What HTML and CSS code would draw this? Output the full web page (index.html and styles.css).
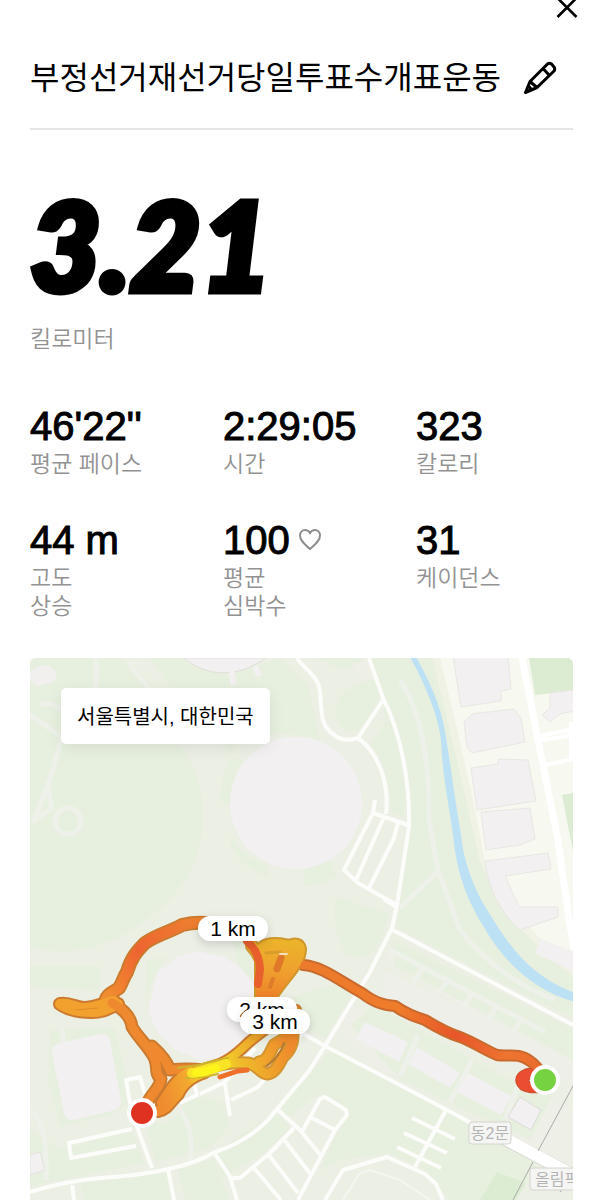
FILE: index.html
```html
<!DOCTYPE html>
<html lang="ko">
<head>
  <meta charset="UTF-8">
  <meta name="viewport" content="width=device-width, initial-scale=1.0">
  <title>부정선거재선거당일투표수개표운동</title>
  <link rel="stylesheet" href="styles.css">
</head>

<body>

  <div class="top-bar">
    <button class="icon-button" aria-label="닫기">
      <svg width="24" height="20" viewBox="0 0 24 20"><path d="M2.500 -2L21.500 17M21.500 -2L2.500 17" fill="none" stroke="#000" stroke-width="2.600"/></svg>
    </button>
  </div>

  <main class="activity">
    <header class="title-row">
      <h1>부정선거재선거당일투표수개표운동</h1>
      <button class="icon-button" aria-label="이름 수정">
        <svg width="34" height="34" viewBox="0 0 34 34" fill="none" stroke="#000" stroke-width="3" stroke-linejoin="round">
          <path d="M2.500 31.500L7 20.500L24.500 3Q26.500 1.500 28.500 3L31 6Q32.500 8 31 10L14 26.500Z"/>
          <path d="M20 7.500L26.500 14.500M7 20.500L14 26.500M5.500 25L9 29"/>
        </svg>
      </button>
    </header>

    <section class="distance">
      <p class="distance-value">3.21</p>
      <p class="label">킬로미터</p>
    </section>

    <section class="stats">
      <div>
        <p class="value">46'22''</p>
        <p class="label">평균 페이스</p>
      </div>
      <div>
        <p class="value">2:29:05</p>
        <p class="label">시간</p>
      </div>
      <div>
        <p class="value">323</p>
        <p class="label">칼로리</p>
      </div>
      <div>
        <p class="value">44 m</p>
        <p class="label">고도<br>상승</p>
      </div>
      <div>
        <p class="value">100
          <svg class="heart" width="24" height="24" viewBox="0 0 24 24"><path d="M12 21C7 16.500 2 13 2 7.500C2 4 4.500 2 7 2C9.500 2 11 3.200 12 5C13 3.200 14.500 2 17 2C19.500 2 22 4 22 7.500C22 13 17 16.500 12 21Z" fill="none" stroke="#8d8d8d" stroke-width="2"/></svg>
        </p>
        <p class="label">평균<br>심박수</p>
      </div>
      <div>
        <p class="value">31</p>
        <p class="label">케이던스</p>
      </div>
    </section>

    <section class="map">
      <svg class="map-canvas" viewBox="30 658 543 542">
        <defs>
          <linearGradient id="east" gradientUnits="userSpaceOnUse" x1="303" y1="963" x2="544" y2="1070">
            <stop offset="0" stop-color="#ec7a2c"/>
            <stop offset="0.400" stop-color="#ef7c2b"/>
            <stop offset="0.640" stop-color="#e8562a"/>
            <stop offset="0.850" stop-color="#ee7430"/>
            <stop offset="1" stop-color="#e96a2c"/>
          </linearGradient>
          <linearGradient id="west" gradientUnits="userSpaceOnUse" x1="105" y1="1000" x2="205" y2="922">
            <stop offset="0" stop-color="#f19030"/>
            <stop offset="0.450" stop-color="#ee6430"/>
            <stop offset="1" stop-color="#ee8230"/>
          </linearGradient>
          <linearGradient id="cross" gradientUnits="userSpaceOnUse" x1="160" y1="1090" x2="290" y2="1050">
            <stop offset="0" stop-color="#f08c30"/>
            <stop offset="0.200" stop-color="#f2a62f"/>
            <stop offset="0.400" stop-color="#f8ea22"/>
            <stop offset="0.620" stop-color="#efbc2b"/>
            <stop offset="1" stop-color="#ef8b2c"/>
          </linearGradient>
          <linearGradient id="knot" gradientUnits="userSpaceOnUse" x1="275" y1="938" x2="270" y2="1000">
            <stop offset="0" stop-color="#ebb52a"/>
            <stop offset="0.500" stop-color="#efa12f"/>
            <stop offset="1" stop-color="#ee8029"/>
          </linearGradient>

          <path id="t-east" d="M303 965C322 966 340 981 362 993C375 1003 384 1005 395 1006C405 1013 418 1018 425 1020C435 1026 447 1033 460 1037C475 1043 487 1051 497 1055C508 1057 518 1052 530 1061Q538 1066 542 1077"/>
          <path id="t-hook" d="M542 1074L528 1074Q517 1078 524 1085Q529 1088 540 1087"/>
          <path id="t-west" d="M106 999C108 993 114 992 119 988C123 982 123 978 127 972C131 958 137 951 145 943C158 934 170 932 182 925Q194 922 206 923"/>
          <path id="t-tail" d="M60 1004C70 1002 77 1009 86 1008C97 1007 105 1003 114 1001M60 1004C68 1010 78 1012 92 1012C105 1012 108 1008 118 1004"/>
          <path id="t-south" d="M112 1003C123 1009 131 1016 132 1027C138 1037 146 1044 152 1054C160 1064 153 1073 161 1079C160 1089 150 1094 146 1106M152 1046C161 1054 167 1061 170 1070Q186 1068 204 1070"/>
          <path id="t-return" d="M158 1111C169 1108 169 1102 178 1094C182 1084 190 1077 205 1072M162 1103C170 1091 175 1080 190 1072"/>
          <path id="t-cross" d="M198 1070C222 1067 236 1055 248 1043C265 1029 279 1018 296 1010"/>
          <path id="t-loop" d="M202 1070C222 1063 234 1062 248 1063C259 1065 260 1074 268 1074C276 1072 279 1064 283 1057C290 1051 294 1044 293 1029M259 1062C268 1061 270 1052 274 1045C281 1039 289 1040 291 1028"/>
          <path id="t-knot" d="M252 946Q258 952 261 960L261 1000M268 1000Q272 995 280 984C289 972 300 961 300 949Q299 942 289 946C277 943 267 944 262 948"/>
        </defs>

        <rect x="30" y="658" width="543" height="542" fill="#eeefe7"/>

        <!-- Parks -->
        <g fill="#e7efdf">
          <path d="M30 658H190Q205 680 250 674L275 658H345L390 720L410 820L400 900L385 950L335 1030L380 1070L470 1110L573 1170V1200H30V1090L60 1125L130 1110L170 1120L240 1110L300 1050L330 980L270 930L205 960L160 990L60 1010L30 990V948Q100 960 148 918Q198 880 198 810Q194 765 170 744L230 735Q290 720 325 745Q375 765 375 812L400 820V658H435L480 820L510 900L573 950V1040L395 945L385 960L573 1075V1110L340 1000L315 1040L240 1130L30 1170Z" opacity="0.300"/>
          <path d="M30 658H120Q170 690 180 745A122 122 0 0 1 148 918Q92 963 30 947Z"/>
          <path d="M150 658H182Q200 674 225 673L280 658L308 685L320 740Q260 723 230 753L180 700Z"/>
          <path d="M318 658H365Q345 672 335 667ZM380 677Q325 690 337 722Q350 737 361 728L380 700ZM370 745Q390 765 391 812L405 818L402 770L387 720Z"/>
          <path d="M230 758Q219 780 221 803H230Q232 776 244 760ZM228 838Q235 865 270 878L265 864Q242 856 233 838ZM304 870V886Q325 885 337 875L329 858Z"/>
          <path d="M336 897L390 914L380 940Q370 965 347 955Q330 930 336 897Z"/>
          <path d="M371 658H435L466 790L484 865Q515 930 573 972V1018L397 928L410 820Z"/>
          <path d="M393 940L573 1029V1060L395 966ZM283 1000L342 982L355 990L325 1038L300 1024Z"/>
          <path d="M331 1050L400 1086L470 1122L540 1160L515 1200H450L420 1167L390 1153L340 1160L320 1170L347 1112L320 1092L290 1117L280 1108ZM350 1025L375 1005L510 1080L560 1080L530 1140L400 1079Z"/>
          <path d="M30 966H98Q105 980 96 991L30 986ZM50 1030L115 1028L132 1100L110 1115L60 1126L48 1080ZM145 1120Q175 1130 183 1104Q218 1085 228 1118Q228 1135 205 1150L155 1162ZM30 1130L60 1150L130 1129L145 1163L30 1186ZM80 1183L166 1171L172 1200H85ZM178 1170L214 1158L230 1200H186ZM240 1135L275 1112L290 1128L263 1154L222 1177L215 1155Z"/>
          <path d="M147 960L165 957L160 970Q147 980 146 1018ZM230 932L250 938L252 980L240 970Z"/>
        </g>

        <!-- Footpaths -->
        <g fill="none" stroke="#eef1ea" stroke-width="5">
          <path d="M95 658Q101 680 89 698M40 705Q50 700 61 710M30 715L62 737L48 785L52 810M33 823L48 784M52 808L32 822M128 663L150 690"/>
          <circle cx="68" cy="821" r="13"/>
          <path d="M400 680Q430 725 429 820L438 870L460 930Q500 980 555 1000M437 872L400 908"/>
          <path d="M390 950L545 1032M423 968L413 984M448 980L437 995M473 992L462 1008M498 1004L488 1020M523 1017L512 1033M418 1035L400 1076M472 1060L450 1102M518 1085L505 1120M62 1030L75 1115M180 1110Q195 1130 190 1160M30 1110Q48 1120 46 1180"/>
        </g>
        <path d="M30 671Q50 659 56 673Q57 684 44 684L38 687L30 681Z" fill="#f1f0ef"/>
        <path d="M384 970L573 1063V1083L540 1076L385 998Z" fill="#efefe9"/>

        <!-- City blocks east of the river -->
        <path d="M432 658L447 718L466 800L480 862Q505 925 573 976V658Z" fill="#f0f2e5"/>
        <path d="M440 658L455 720L473 800L485 862Q510 920 573 965V658Z" fill="#f7f8ef"/>
        <path d="M529 658H573V691L535 695ZM562 795L573 793V851Z" fill="#dcecd2"/>
        <g fill="#f2f0f0" stroke="#e9e6e3" stroke-width="1">
          <path d="M453 657L461 707L501 701V691L511 689L508 657Z"/>
          <path d="M464 722L472 714L514 709L521 718L525 742L472 753L467 747Z"/>
          <path d="M471 768L498 764V759L528 760L536 801L477 810Z"/>
          <path d="M481 812L530 808L535 839L520 845L486 850Z"/>
          <path d="M485 861L548 853L551 869L505 876L519 907L558 907V917L520 930Q490 903 485 861Z"/>
          <path d="M550 693L574 690V711L560 714L550 722L542 715L550 708Z"/>
          <path d="M540 939L574 951V972L535 953Z" stroke="none"/>
        </g>
        <g fill="none" stroke="#fff">
          <path d="M522 658L540 750L558 840L567 905L574 950" stroke-width="7"/>
          <path d="M536 737L573 729M537 741L573 735M541 766L573 759M571 722V762" stroke-width="4"/>
        </g>

        <path d="M410 657L416 657C429 680 441 705 445 732C450 760 455 800 461 835C463 860 474 890 489 913C509 945 529 976 575 993V1002C532 990 501 959 482 924C463 893 456 865 453 835C449 805 443 780 441 740C438 715 425 684 410 657Z" fill="#bde1f4"/>

        <!-- Venues -->
        <g fill="#f2f0f0">
          <path d="M183 658Q223 688 266 658Z" stroke="#dfdfd6"/>
          <path d="M228 673L234 670L237 684L231 686ZM253 667L258 665L262 675L256 677Z"/>
          <circle cx="296" cy="803" r="66"/>
          <path d="M158 970L171 964L176 957L197 951L224 957L241 968L254 985L256 1010L250 1035L231 1056L200 1060L174 1049L156 1030L148 1011Z"/>
          <path d="M60 1043L101 1034Q108 1034 110 1040L121 1100Q121 1108 115 1110L74 1120Q67 1121 64 1114L52 1053Q51 1045 60 1043Z"/>
          <path d="M30 1155L40 1152L45 1170L30 1175Z" stroke="#e3e3dc"/>
          <path d="M365 1022L408 1042L399 1062L356 1039ZM417 1047L460 1073L450 1088L408 1064ZM468 1073L511 1096L501 1115L457 1092Z"/>
          <path d="M520 1097L541 1110L531 1130L508 1117Z" stroke="#dedbd9"/>
        </g>
        <path d="M497 1172L526 1183L516 1200H480Z" fill="#dcecd2"/>

        <!-- Roads -->
        <g fill="none" stroke="#fcfdfb" stroke-width="4" stroke-linejoin="round">
          <path d="M297 658C303 668 319 676 320 692C322 712 320 725 333 734Q342 743 358 738C375 750 390 778 386 814M358 738L383 700"/>
          <path d="M369 658L383 698C402 735 410 785 409 827Q403 865 397 905L392 928L370 972L325 1046L309 1071L277 1109Q255 1139 215 1152Q180 1173 100 1178Q60 1182 30 1192"/>
          <path d="M375 800L373 813L344 870L358 883L397 905M373 813L408 825M384 817L356 880M398 823L394 838L369 888"/>
          <path d="M384 899L396 907M391 929L573 1025M300 1032L325 1046L400 1085L460 1117L515 1148"/>
          <path d="M132 1113L152 1168M132 1129L69 1143L71 1158L136 1146M132 1114L126 1080L140 1077L145 1094M72 1185L74 1200M168 1169L174 1200M193 1078L197 1095L180 1103M200 1094L225 1082L255 1048M225 1084L230 1116M231 1100L258 1087L303 1033"/>
          <path d="M277 1109L300 1130L322 1157M302 1132L320 1099L325 1097L346 1110L347 1115L335 1130L298 1200M310 1117L335 1130M294 1128L270 1153L240 1178H231L215 1154M230 1177L237 1200M285 1141L312 1176M268 1154L298 1193M254 1168L281 1200"/>
          <path d="M325 1200L343 1170L387 1157L425 1174L436 1184L443 1200M446 1110L415 1167M412 1118L455 1139M404 1133L447 1153M397 1147L441 1168"/>
          <path d="M343 1200L359 1174L370 1170L400 1180L430 1200" stroke="#f5f6f1" stroke-width="2"/>
        </g>
        <path d="M499 1136L573 1175" fill="none" stroke="#d0d0cc" stroke-width="13"/>
        <path d="M498 1135L573 1175" fill="none" stroke="#fff" stroke-width="12"/>
        <path d="M538 1151L573 1086M513 1200L533 1162M560 1192L573 1180" fill="none" stroke="#aaa" stroke-width="1"/>

        <!-- Place names -->
        <g class="place">
          <rect x="469" y="1122" width="42" height="22" rx="3"/>
          <text x="490" y="1139" text-anchor="middle">동2문</text>
          <rect x="530" y="1168" width="60" height="22" rx="3"/>
          <text x="535" y="1185">올림픽공원</text>
        </g>

        <!-- Route: darker casing below, pace colours on top -->
        <g fill="none" stroke-linecap="round" stroke-linejoin="round">
          <g stroke="#cc7b2e" stroke-width="14">
            <use href="#t-east" stroke="#c96a2d" stroke-width="12"/>
            <use href="#t-hook" stroke="#cb502d" stroke-width="12"/>
            <use href="#t-west"/>
            <use href="#t-tail"/>
            <use href="#t-south" stroke-width="13"/>
            <use href="#t-return"/>
            <use href="#t-cross" stroke-width="12"/>
            <use href="#t-loop" stroke="#d39530" stroke-width="13"/>
            <use href="#t-knot" stroke="#cf962c"/>
          </g>
          <path d="M256 946L268 943L289 945L300 948L296 963L282 980L273 1002H258L260 970Z" fill="url(#knot)"/>
          <g stroke-width="10">
            <use href="#t-east" stroke="url(#east)" stroke-width="8"/>
            <use href="#t-hook" stroke="#ea4d30"/>
            <use href="#t-west" stroke="url(#west)"/>
            <use href="#t-tail" stroke="#f2a12f"/>
            <use href="#t-south" stroke="#ef8930" stroke-width="9"/>
            <use href="#t-cross" stroke="url(#cross)" stroke-width="8"/>
            <use href="#t-return" stroke="url(#cross)"/>
            <use href="#t-loop" stroke="url(#cross)" stroke-width="9"/>
            <use href="#t-knot" stroke="url(#knot)"/>
          </g>
          <path d="M247 941C256 949 260 958 260 970L258 984" stroke="#e8602c" stroke-width="8"/>
          <path d="M266 953L280 952" stroke="#d99c2b" stroke-width="3"/>
          <path d="M281 958L277 969" stroke="#e0782a" stroke-width="7"/>
          <path d="M273 979L270 987" stroke="#dd7c29" stroke-width="4"/>
          <path d="M280 954L287 954" stroke="#f2dfbd" stroke-width="2"/>
          <path d="M220 1077L238 1071L247 1070" stroke="#ee7029" stroke-width="5"/>
          <path d="M178 1068L198 1065L228 1058M186 1078L204 1077L218 1074" stroke="#ccb42e" stroke-width="2"/>
          <path d="M192 1073L206 1071L226 1064" stroke="#f9e324" stroke-width="10"/>
          <path d="M196 1073L206 1071L216 1068" stroke="#fdf41c" stroke-width="8"/>
          <path d="M267 1066Q280 1056 284 1043" stroke="#b5772f" stroke-width="2"/>
          <path d="M76 1010L98 1008" stroke="#db8b2c" stroke-width="1"/>
        </g>

        <!-- Start and finish -->
        <g stroke="#fff" stroke-width="4">
          <circle cx="142" cy="1113" r="13" fill="#e03221"/>
          <circle cx="545" cy="1080" r="13" fill="#76d241"/>
        </g>

        <!-- Kilometre marks -->
        <g class="mark">
          <rect x="198" y="916" width="70" height="25" rx="12"/>
          <text x="233" y="936">1 km</text>
          <rect x="227" y="997" width="70" height="25" rx="12"/>
          <text x="262" y="1017">2 km</text>
          <rect x="240" y="1009" width="70" height="25" rx="12"/>
          <text x="275" y="1029">3 km</text>
        </g>
      </svg>
      <p class="location">서울특별시, 대한민국</p>
    </section>
  </main>

</body>
</html>
```

FILE: styles.css
```css
* {
  box-sizing: border-box;
}

body {
  margin: 0;
  background: #fff;
  color: #000;
  font-family: "Liberation Sans", "Noto Sans CJK KR", sans-serif;
}

h1, p {
  margin: 0;
}

.icon-button {
  display: block;
  padding: 0;
  border: none;
  background: none;
  cursor: pointer;
}

.icon-button svg {
  display: block;
}

.top-bar {
  display: flex;
  justify-content: flex-end;
  padding-right: 25px;
}

.activity {
  padding: 0 31px 0 30px;
}

.title-row {
  display: flex;
  justify-content: space-between;
  align-items: center;
  height: 110px;
  padding: 8px 16px 0 0;
  border-bottom: 2px solid #e5e5e5;
}

h1 {
  font-size: 32px;
  font-weight: 400;
  line-height: 48px;
  white-space: nowrap;
}

.distance {
  padding-top: 52px;
}

.distance-value {
  font-family: Lato, sans-serif;
  font-size: 122px;
  font-style: italic;
  font-weight: 900;
  line-height: 124px;
  -webkit-text-stroke: 7px #000;
}

.label {
  padding-top: 2px;
  color: #929292;
  font-size: 23px;
  font-weight: 350;
  line-height: 28px;
}

.distance .label {
  margin-top: 17px;
}

.stats {
  display: grid;
  grid-template-columns: repeat(3, 1fr);
  gap: 40px 36px;
  margin-top: 51px;
}

.value {
  display: flex;
  align-items: center;
  gap: 8px;
  font-size: 40px;
  line-height: 44px;
  white-space: nowrap;
  -webkit-text-stroke: 1px #000;
}

.map {
  position: relative;
  margin-top: 38px;
  border-radius: 6px 6px 0 0;
  overflow: hidden;
}

.map-canvas {
  display: block;
  width: 100%;
  height: auto;
}

.location {
  position: absolute;
  top: 30px;
  left: 31px;
  padding: 15px 16px 13px;
  border-radius: 5px;
  background: #fff;
  box-shadow: 0 4px 16px rgba(0, 0, 0, 0.08);
  font-size: 20px;
  line-height: 28px;
}

.place rect {
  fill: #f5f5f3;
  stroke: #d4d4d0;
}

.place text {
  fill: #b4b4b4;
  font-size: 16px;
}

.mark rect {
  fill: #fff;
  filter: drop-shadow(0 3px 5px rgba(0, 0, 0, 0.15));
}

.mark text {
  font-size: 21px;
  text-anchor: middle;
}
```
